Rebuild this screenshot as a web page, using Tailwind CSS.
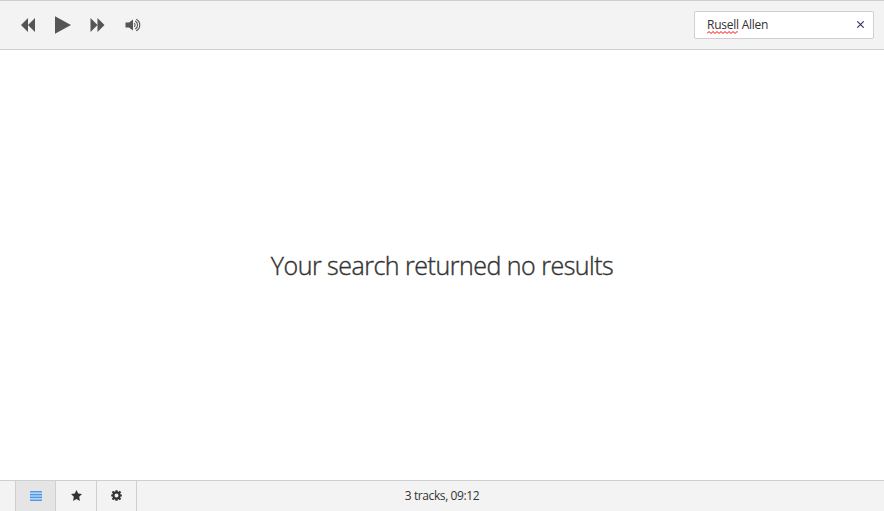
<!DOCTYPE html>
<html lang="en">
<head>
<meta charset="utf-8">
<title>Music player</title>
<script src="https://cdn.jsdelivr.net/npm/@tailwindcss/browser@4"></script>
</head>
<body class="flex h-screen flex-col overflow-hidden bg-white font-['Open_Sans','Noto_Sans',sans-serif] text-xs text-[#333]">
<header class="flex h-[50px] shrink-0 items-center justify-between border-y border-[#cfcfcf] bg-[#f3f3f3] pr-2.5 pl-[21px]">
  <div class="flex items-center text-[#555]">
    <button aria-label="Previous"><svg class="block h-[14px] w-[14px]" viewBox="0 0 14 14" fill="currentColor"><path d="M0 7 7 0v14zM7 7l7-7v14z"/></svg></button>
    <button aria-label="Play" class="ml-5"><svg class="block h-[18px] w-4" viewBox="0 0 16 18" fill="currentColor"><path d="M0 0.3 16 9 0 17.7z"/></svg></button>
    <button aria-label="Next" class="ml-[19px]"><svg class="block h-[14px] w-[15px]" viewBox="0 0 15 14" fill="currentColor"><path d="M.5 0l7 7-7 7zM7.500 0l7 7-7 7z"/></svg></button>
    <button aria-label="Volume" class="ml-5"><svg class="block h-[14px] w-4" viewBox="0 0 16 14" fill="currentColor"><path d="M.5 4.500h3.500L8 1.500v11L4 9.500H.5z"/><path d="M9.200 5.200a2.300 2.300 0 0 1 0 3.600M10.200 3.100a4.400 4.400 0 0 1 0 7.800M11.200 1.200a6.500 6.500 0 0 1 0 11.600" fill="none" stroke="currentColor" stroke-width="1.100"/></svg></button>
  </div>
  <div class="flex h-7 w-[180px] items-center justify-between rounded-[2px] border border-[#cfcfcf] bg-white pr-[9px] pl-3">
    <div class="relative whitespace-nowrap leading-4 tracking-[-0.25px]">Rusell Allen
      <svg class="absolute top-[14px] left-0 h-[3px] w-[31px]" viewBox="0 0 31 3" fill="none" stroke="#f00" stroke-width="1"><path d="M0 2.500l2-2 2 2 2-2 2 2 2-2 2 2 2-2 2 2 2-2 2 2 2-2 2 2 2-2 2 2 2-2 1 1"/></svg>
    </div>
    <button aria-label="Clear search" class="-translate-y-px"><svg class="block h-[7px] w-[7px]" viewBox="0 0 7 7" fill="none" stroke="#30305c" stroke-width="1.100"><path d="M.3.300l6.400 6.400M6.700.300.300 6.700"/></svg></button>
  </div>
</header>
<main class="flex min-h-0 flex-1 items-center justify-center">
  <h1 class="whitespace-nowrap font-['Open_Sans','Noto_Sans',sans-serif] text-[25px] leading-8 font-light tracking-[-0.5px] [-webkit-text-stroke:0.4px_#333]">Your search returned no results</h1>
</main>
<footer class="grid h-[31px] shrink-0 grid-cols-[1fr_auto_1fr] border-t border-[#cfcfcf] bg-[#f3f3f3]">
  <nav class="ml-[15px] flex">
    <button aria-label="Library" class="flex w-[41px] items-center justify-center border-x border-[#cfcfcf] bg-[#e5e5e5] text-[#459ced]"><svg class="h-[10px] w-3" viewBox="0 0 12 10" fill="currentColor"><path d="M0 0h12v1.400H0zM0 2.700h12v1.700H0zM0 5.600h12v1.600H0zM0 8.400h12V10H0z"/></svg></button>
    <button aria-label="Favorites" class="flex w-[41px] items-center justify-center border-r border-[#cfcfcf] pb-px"><svg class="h-[11px] w-[11px]" viewBox="0 0 11 11" fill="currentColor"><path d="m5.500 0 1.700 3.500 3.800.600-2.800 2.700.7 4.200-3.400-2-3.400 2 .7-4.200L0 4.100l3.800-.6z"/></svg></button>
    <button aria-label="Settings" class="flex w-10 items-center justify-center border-r border-[#cfcfcf] pb-px"><svg class="h-[11px] w-[11px]" viewBox="0 0 11 11"><circle cx="5.500" cy="5.500" r="3.100" fill="none" stroke="currentColor" stroke-width="2.200"/><path d="M5.500 0.200v2M5.500 8.800v2M0.200 5.500h2M8.800 5.500h2M1.500 1.500 3 3M8 8l1.500 1.500M1.500 9.500 3 8M8 3l1.500-1.500" stroke="currentColor" stroke-width="2.200"/></svg></button>
  </nav>
  <div class="self-center whitespace-nowrap tracking-[-0.4px]">3 tracks, 09:12</div>
</footer>
</body>
</html>
